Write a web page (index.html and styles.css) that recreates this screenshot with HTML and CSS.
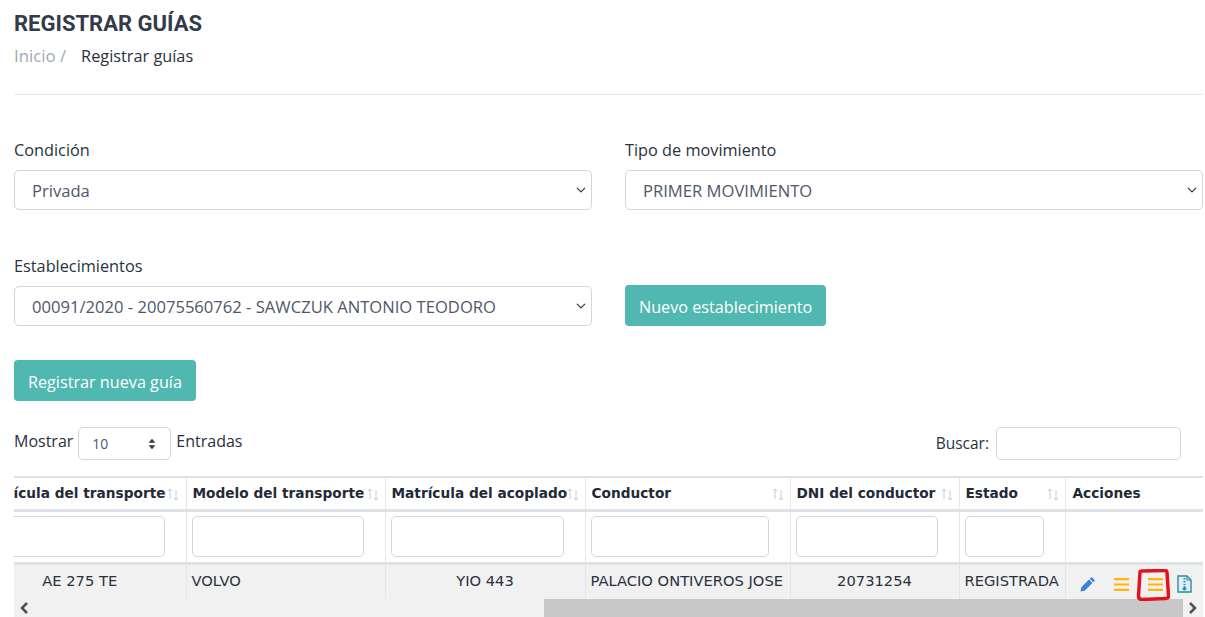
FILE: index.html
```html
<!DOCTYPE html>
<html lang="es">
<head>
<meta charset="utf-8">
<title>Registrar guías</title>
<link rel="stylesheet" href="styles.css">
</head>
<body>
<main class="page">
  <h1 class="title">REGISTRAR GUÍAS</h1>
  <nav class="crumbs"><span class="crumb-link">Inicio /</span><span>Registrar guías</span></nav>
  <hr class="rule">
  <section class="form-grid">
    <div class="field">
      <label class="label">Condición</label>
      <div class="select"><span>Privada</span><svg class="chev" viewBox="0 0 16 16"><path d="M2 5l6 6 6-6" fill="none" stroke="#343a40" stroke-width="2" stroke-linecap="round" stroke-linejoin="round"/></svg></div>
    </div>
    <div class="field">
      <label class="label">Tipo de movimiento</label>
      <div class="select"><span>PRIMER MOVIMIENTO</span><svg class="chev" viewBox="0 0 16 16"><path d="M2 5l6 6 6-6" fill="none" stroke="#343a40" stroke-width="2" stroke-linecap="round" stroke-linejoin="round"/></svg></div>
    </div>
    <div class="field">
      <label class="label">Establecimientos</label>
      <div class="select"><span>00091/2020 - 20075560762 - SAWCZUK ANTONIO TEODORO</span><svg class="chev" viewBox="0 0 16 16"><path d="M2 5l6 6 6-6" fill="none" stroke="#343a40" stroke-width="2" stroke-linecap="round" stroke-linejoin="round"/></svg></div>
    </div>
    <div class="field field-btn">
      <button class="btn">Nuevo establecimiento</button>
    </div>
  </section>
  <button class="btn btn-new">Registrar nueva guía</button>
  <div class="table-tools">
    <div class="length">
      <span class="length-text">Mostrar</span>
      <div class="mini-select"><span>10</span><svg class="updown" viewBox="0 0 10 14"><path d="M5 1l4 4.500H1zM5 13L1 8.500h8z" fill="#343a40"/></svg></div>
      <span class="length-text">Entradas</span>
    </div>
    <div class="search"><span>Buscar:</span><div class="search-input"></div></div>
  </div>
  <div class="table-wrap">
    <table class="grid">
      <colgroup>
        <col class="c1"><col class="c2"><col class="c3"><col class="c4"><col class="c5"><col class="c6"><col class="c7">
      </colgroup>
      <thead>
        <tr class="head">
          <th><div class="th-in th-first"><span>Matrícula del transporte</span><svg class="sort" viewBox="0 0 12 15"><path d="M3 12V2M1 4l2-2 2 2M9 3v10M7 11l2 2 2-2" fill="none" stroke="#c8ccd2" stroke-width="1"/></svg></div></th>
          <th><div class="th-in"><span>Modelo del transporte</span><svg class="sort" viewBox="0 0 12 15"><path d="M3 12V2M1 4l2-2 2 2M9 3v10M7 11l2 2 2-2" fill="none" stroke="#c8ccd2" stroke-width="1"/></svg></div></th>
          <th><div class="th-in"><span>Matrícula del acoplado</span><svg class="sort" viewBox="0 0 12 15"><path d="M3 12V2M1 4l2-2 2 2M9 3v10M7 11l2 2 2-2" fill="none" stroke="#c8ccd2" stroke-width="1"/></svg></div></th>
          <th><div class="th-in"><span>Conductor</span><svg class="sort" viewBox="0 0 12 15"><path d="M3 12V2M1 4l2-2 2 2M9 3v10M7 11l2 2 2-2" fill="none" stroke="#c8ccd2" stroke-width="1"/></svg></div></th>
          <th><div class="th-in"><span>DNI del conductor</span><svg class="sort" viewBox="0 0 12 15"><path d="M3 12V2M1 4l2-2 2 2M9 3v10M7 11l2 2 2-2" fill="none" stroke="#c8ccd2" stroke-width="1"/></svg></div></th>
          <th><div class="th-in"><span>Estado</span><svg class="sort" viewBox="0 0 12 15"><path d="M3 12V2M1 4l2-2 2 2M9 3v10M7 11l2 2 2-2" fill="none" stroke="#c8ccd2" stroke-width="1"/></svg></div></th>
          <th><div class="th-in th-last"><span>Acciones</span></div></th>
        </tr>
        <tr class="filters">
          <td><div class="f-in"></div></td>
          <td><div class="f-in"></div></td>
          <td><div class="f-in"></div></td>
          <td><div class="f-in"></div></td>
          <td><div class="f-in"></div></td>
          <td><div class="f-in"></div></td>
          <td></td>
        </tr>
      </thead>
      <tbody>
        <tr class="row">
          <td class="ctr">AE 275 TE</td>
          <td>VOLVO</td>
          <td class="ctr">YIO 443</td>
          <td>PALACIO ONTIVEROS JOSE</td>
          <td class="ctr">20731254</td>
          <td>REGISTRADA</td>
          <td class="actions">
            <div class="icons">
              <svg class="ic-pen" viewBox="0 0 16 16"><path d="M11.600 1l3.400 3.400-1.800 1.800-3.400-3.400zM9 3.600l3.400 3.400-7.700 7.700-4.200.8.800-4.200z" fill="#3a85d8"/></svg>
              <svg class="ic-bars" viewBox="0 0 15 13"><path d="M0 0h15v2.200H0zM0 5.400h15v2.200H0zM0 10.800h15V13H0z" fill="#ffb50e"/></svg>
              <span class="marked"><svg class="ic-bars" viewBox="0 0 15 13"><path d="M0 0h15v2.200H0zM0 5.400h15v2.200H0zM0 10.800h15V13H0z" fill="#ffb50e"/></svg><svg class="scribble" viewBox="0 0 34 32"><path d="M4 3.500Q4 2 6 2L29 1.500Q31 1.500 31 3.500L32.500 27Q32.500 29.500 30 29.500L6 30.500Q2.500 30.500 2.500 27z" fill="none" stroke="#e4121c" stroke-width="3.500" stroke-linejoin="round"/></svg></span>
              <svg class="ic-zip" viewBox="0 0 15 18"><path d="M1 1h9l4 4v12H1z" fill="#dcf1f5" stroke="#2d8c9c" stroke-width="1.400"/><path d="M10 1v4h4" fill="none" stroke="#2d8c9c" stroke-width="1.100"/><path d="M6.500 3h2v1.500h-2zM6.500 6h2v1.500h-2zM6.500 9h2v1h-2z" fill="#2d8c9c"/><path d="M7.500 10.500l2 3a2 2 0 1 1-4 0z" fill="#2a8ec4"/></svg>
            </div>
          </td>
        </tr>
      </tbody>
    </table>
  </div>
  <div class="hscroll">
    <span class="sb-btn"><svg viewBox="0 0 10 12"><path d="M8 1L3 6l5 5" fill="none" stroke="#505050" stroke-width="2.500"/></svg></span>
    <span class="sb-track"></span>
    <span class="sb-thumb"></span>
    <span class="sb-btn"><svg viewBox="0 0 10 12"><path d="M2 1l5 5-5 5" fill="none" stroke="#505050" stroke-width="2.500"/></svg></span>
  </div>
</main>
</body>
</html>
```
FILE: styles.css
```css
* { box-sizing: border-box; }
html, body { margin: 0; height: 617px; overflow: hidden; background: #fff; }
body { font-family: "Open Sans", "Noto Sans", sans-serif; font-size: 16.300px; color: #2a3140; }
.page { padding: 11px 2px 0 14px; width: 1205px; }
.title { margin: 0; font: 700 22px/26px Roboto, sans-serif; color: #333a4a; }
.crumbs { display: flex; gap: 15px; margin-top: 6px; line-height: 26px; height: 26px; }
.crumb-link { color: #a0a8b4; font-size: 16.800px; }
.rule { border: 0; border-top: 1px solid #e6e7ea; margin: 25px 0 0; }
.form-grid { display: grid; grid-template-columns: 578px 578px; column-gap: 33px; row-gap: 43px; margin-top: 42px; }
.field { display: flex; flex-direction: column; }
.label { line-height: 26px; height: 26px; margin-bottom: 7px; }
.field-btn { justify-content: flex-end; align-items: flex-start; }
.select { height: 40px; border: 1px solid #d3d5dc; border-radius: 5px; display: flex; align-items: center; justify-content: space-between; padding: 0 5px 0 17px; color: #50576a; font-size: 16.600px; }
.chev { width: 10px; height: 10px; }
.btn { height: 41px; border: 0; border-radius: 4px; background: #50b8b0; color: #fff; font: 16.200px "Open Sans", sans-serif; padding: 2px 14px 0; }
.btn-new { display: block; margin-top: 34px; }
.table-tools { display: flex; justify-content: space-between; align-items: flex-start; margin-top: 26px; height: 49px; padding-right: 22px; }
.length { display: flex; align-items: flex-start; gap: 5px; line-height: 26px; font-size: 16px; }
.length-text { margin-top: 1px; }
.mini-select { width: 93px; height: 33px; border: 1px solid #d3d5dc; border-radius: 5px; display: flex; align-items: center; justify-content: space-between; padding: 1px 13px 0 13px; font-size: 14px; color: #50576a; }
.updown { width: 10px; height: 12px; }
.search { display: flex; gap: 7px; line-height: 33px; font-size: 15.500px; }
.search-input { width: 185px; height: 33px; border: 1px solid #d3d5dc; border-radius: 5px; }
.table-wrap { overflow-x: clip; overflow-y: visible; width: 1189px; height: 123px; border-top: 2px solid #dee2e6; }
.grid { border-collapse: collapse; table-layout: fixed; width: 1229px; margin-left: -40px; font-family: "DejaVu Sans", sans-serif; font-size: 14.700px; color: #2a3140; }
.c1 { width: 212px; } .c2 { width: 199px; } .c3 { width: 200px; } .c4 { width: 205px; } .c5 { width: 169px; } .c6 { width: 106px; } .c7 { width: 138px; }
.head th { height: 32px; padding: 0; border-right: 1px solid #e6e8ec; border-bottom: 3px solid #dee2e6; text-align: left; font-weight: 700; font-size: 13.700px; color: #222a38; }
.head th:last-child { border-right: 0; }
.th-in { display: flex; align-items: center; justify-content: space-between; padding: 0 6px 0 6px; white-space: nowrap; overflow: hidden; }
.th-first { justify-content: flex-end; gap: 1px; padding-right: 7px; }
.th-last { padding-left: 7px; }
.sort { width: 12px; height: 15px; flex: none; margin-top: 2px; }
.filters td { height: 53px; padding: 0 21px 0 5px; border-right: 1px solid #e6e8ec; border-bottom: 3px solid #dee2e6; }
.filters td:last-child { border-right: 0; }
.f-in { height: 41px; border: 1px solid #d3d5dc; border-radius: 5px; }
.row td { height: 36px; padding: 0 5px 3px; background: #f1f1f1; border-right: 1px solid #e3e5e8; border-bottom: 1px solid #e3e5e8; white-space: nowrap; }
.row td:last-child { border-right: 0; }
.ctr { text-align: center; }
.row td.actions { padding: 0; }
.icons { display: flex; align-items: center; padding: 5px 0 0 14px; height: 34px; }
.ic-pen { width: 16px; height: 16px; margin-right: 18px; flex: none; }
.ic-bars { width: 15px; height: 13px; flex: none; display: block; }
.marked { position: relative; margin-left: 19px; margin-right: 14px; display: block; }
.scribble { position: absolute; left: -12px; top: -9px; width: 34px; height: 32px; }
.ic-zip { width: 15px; height: 18px; flex: none; }
.hscroll { display: flex; width: 1189px; height: 18px; background: #f1f1f1; }
.sb-btn { width: 20px; flex: none; display: flex; align-items: center; justify-content: center; }
.sb-btn svg { width: 10px; height: 12px; }
.sb-track { width: 510px; flex: none; }
.sb-thumb { flex: 1; background: #c8c8c8; }
```
